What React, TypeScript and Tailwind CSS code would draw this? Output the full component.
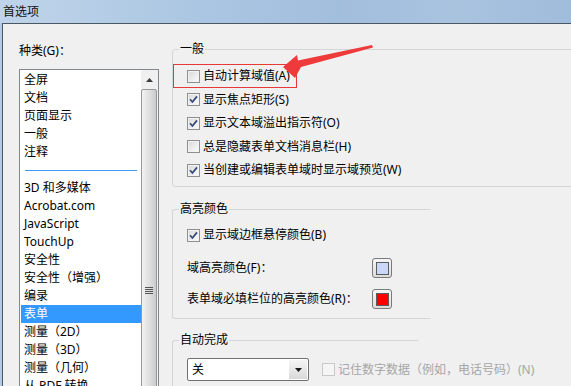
const listItems = [
  "全屏",
  "文档",
  "页面显示",
  "一般",
  "注释",
  "-",
  "3D 和多媒体",
  "Acrobat.com",
  "JavaScript",
  "TouchUp",
  "安全性",
  "安全性（增强）",
  "编录",
  "表单",
  "测量（2D）",
  "测量（3D）",
  "测量（几何）",
  "从 PDF 转换",
]

const CheckBox = ({ checked = false, disabled = false }: { checked?: boolean; disabled?: boolean }) => (
  <span
    className={`flex h-[13px] w-[13px] shrink-0 items-center justify-center border ${
      disabled
        ? "border-[#c9c9c9] bg-[#f5f5f5]"
        : "border-[#8e8f8f] bg-[linear-gradient(135deg,#d8d8d8,#fdfdfd)] shadow-[inset_0_0_0_1px_#f2f2f2]"
    }`}
  >
    {checked && (
      <svg width="11" height="11" viewBox="0 0 11 11">
        <path d="M2 5.3 L4.4 8 L9 2.4" fill="none" stroke="#34477a" strokeWidth="1.7" />
      </svg>
    )}
  </span>
)

const CheckRow = ({ label, checked }: { label: string; checked?: boolean }) => (
  <div className="flex h-[23.5px] items-center gap-[3px] pl-[14px]">
    <CheckBox checked={checked} />
    <span>{label}</span>
  </div>
)

const Swatch = ({ color }: { color: string }) => (
  <span className="flex h-[20px] w-[20px] items-center justify-center rounded-[3px] border border-[#7a7a7a] bg-[linear-gradient(#f6f6f6,#dcdcdc)]">
    <span className={`h-[13px] w-[13px] border border-[#5c5c5c] ${color}`}></span>
  </span>
)

export default function App() {
  return (
    <div className="relative h-[386px] w-[571px] overflow-hidden bg-[#b4cbe4] font-['Noto_Sans','Noto_Sans_CJK_SC',sans-serif] text-[12px] leading-[16px] text-black [text-spacing-trim:space-all]">
      <div className="flex h-[23px] items-center bg-[linear-gradient(90deg,#bfd4ea_0%,#abc6e2_35%,#a2bedd_60%,#a9c3df_80%,#a0bcdb_100%)] pl-[3px] text-[12px] text-[#111]">
        首选项
      </div>

      <div className="flex h-[363px] pl-[2px]">
        <div className="flex flex-1 border-l border-t border-[#4c5764] bg-[#f0f0f0]">
          {/* category list */}
          <div className="flex w-[156px] shrink-0 flex-col pl-[16px] pt-[19px]">
            <div className="h-[16px]">种类(G)：</div>
            <div className="mt-[10px] flex h-[330px] w-[140px] border border-[#828790] bg-white">
              <div className="flex w-[121px] flex-col pl-[1px] pt-[1px]">
                {listItems.map((item, i) =>
                  item === "-" ? (
                    <div key={i} className="flex h-[18px] shrink-0 items-center pl-[4px]">
                      <div className="h-[1px] w-[112px] bg-[#3d9bf5]"></div>
                    </div>
                  ) : (
                    <div
                      key={i}
                      className={`h-[18px] shrink-0 px-[3px] leading-[18px] ${
                        item === "表单" ? "bg-[#3399ff] text-white" : ""
                      }`}
                    >
                      {item}
                    </div>
                  ),
                )}
              </div>
              <div className="flex w-[17px] flex-col bg-[#f0f0f0]">
                <div className="flex h-[19px] items-center justify-center">
                  <svg width="7" height="4" viewBox="0 0 7 4">
                    <path d="M0 4 L3.5 0 L7 4 Z" fill="#3c3c3c" />
                  </svg>
                </div>
                <div className="mr-[1px] flex flex-1 flex-col items-center rounded-[2px] border border-[#989898] bg-[linear-gradient(90deg,#f2f2f2,#dedede_55%,#cbcbcb)] pt-[197px]">
                  <div className="flex flex-col gap-[1px]">
                    <div className="h-[1px] w-[8px] bg-[#555]"></div>
                    <div className="h-[1px] w-[8px] bg-[#555]"></div>
                    <div className="h-[1px] w-[8px] bg-[#555]"></div>
                    <div className="h-[1px] w-[8px] bg-[#555]"></div>
                  </div>
                </div>
              </div>
            </div>
          </div>

          {/* settings */}
          <div className="flex flex-1 flex-col items-start pl-[13px] pt-[17px]">
            <fieldset className="w-[420px] min-w-0 rounded-[3px] border border-[#d3d6d8] pb-[4px]">
              <legend className="ml-[6px] px-[1px] leading-[16px]">一般</legend>
              <div className="flex flex-col pt-[7px]">
                <div className="flex h-[24px] w-[124px] items-center gap-[3px] border border-[#e8393a] pl-[13px]">
                  <CheckBox />
                  <span>自动计算域值(A)</span>
                </div>
                <CheckRow label="显示焦点矩形(S)" checked />
                <CheckRow label="显示文本域溢出指示符(O)" checked />
                <CheckRow label="总是隐藏表单文档消息栏(H)" />
                <CheckRow label="当创建或编辑表单域时显示域预览(W)" checked />
              </div>
            </fieldset>

            <fieldset className="mt-[14px] w-[259px] min-w-0 rounded-l-[3px] border border-[#d3d6d8] border-r-transparent pb-[7px]">
              <legend className="ml-[6px] px-[1px] leading-[16px]">高亮颜色</legend>
              <div className="flex flex-col pt-[6px]">
                <div className="flex h-[24px] items-center gap-[3px] pl-[14px]">
                  <CheckBox checked />
                  <span>显示域边框悬停颜色(B)</span>
                </div>
                <div className="mt-[9px] flex h-[24px] w-[219px] items-center justify-between pl-[14px]">
                  <span>域高亮颜色(F)：</span>
                  <Swatch color="bg-[#cbd7f7]" />
                </div>
                <div className="mt-[7px] flex h-[24px] w-[219px] items-center justify-between pl-[14px]">
                  <span>表单域必填栏位的高亮颜色(R)：</span>
                  <Swatch color="bg-[#ff0000]" />
                </div>
              </div>
            </fieldset>

            <fieldset className="mt-[13px] w-[247px] min-w-0 rounded-l-[3px] border border-[#d3d6d8] border-r-transparent pb-[8px]">
              <legend className="ml-[6px] px-[1px] leading-[16px]">自动完成</legend>
              <div className="flex items-center whitespace-nowrap pl-[14px] pt-[10px]">
                <div className="flex h-[23px] w-[122px] shrink-0 rounded-[2px] border border-[#707070] bg-white p-[1px]">
                  <span className="flex flex-1 items-center pl-[3px]">关</span>
                  <span className="flex w-[18px] items-center justify-center bg-[linear-gradient(#f5f5f5,#d9d9d9)]">
                    <svg width="7" height="4" viewBox="0 0 7 4">
                      <path d="M0 0 L7 0 L3.5 4 Z" fill="#1a1a1a" />
                    </svg>
                  </span>
                </div>
                <div className="ml-[13px] flex items-center gap-[3px] text-[#a6a6a6]">
                  <CheckBox disabled />
                  <span>记住数字数据（例如，电话号码）(N)</span>
                </div>
              </div>
            </fieldset>
          </div>
        </div>
      </div>

      <svg className="pointer-events-none absolute left-0 top-0" width="571" height="386">
        <path
          d="M283 67 L297 55 L298 60.5 L372 45 L373 47.5 L301 67 L295 78 Z"
          fill="#ef3a3b"
        />
      </svg>
    </div>
  )
}
